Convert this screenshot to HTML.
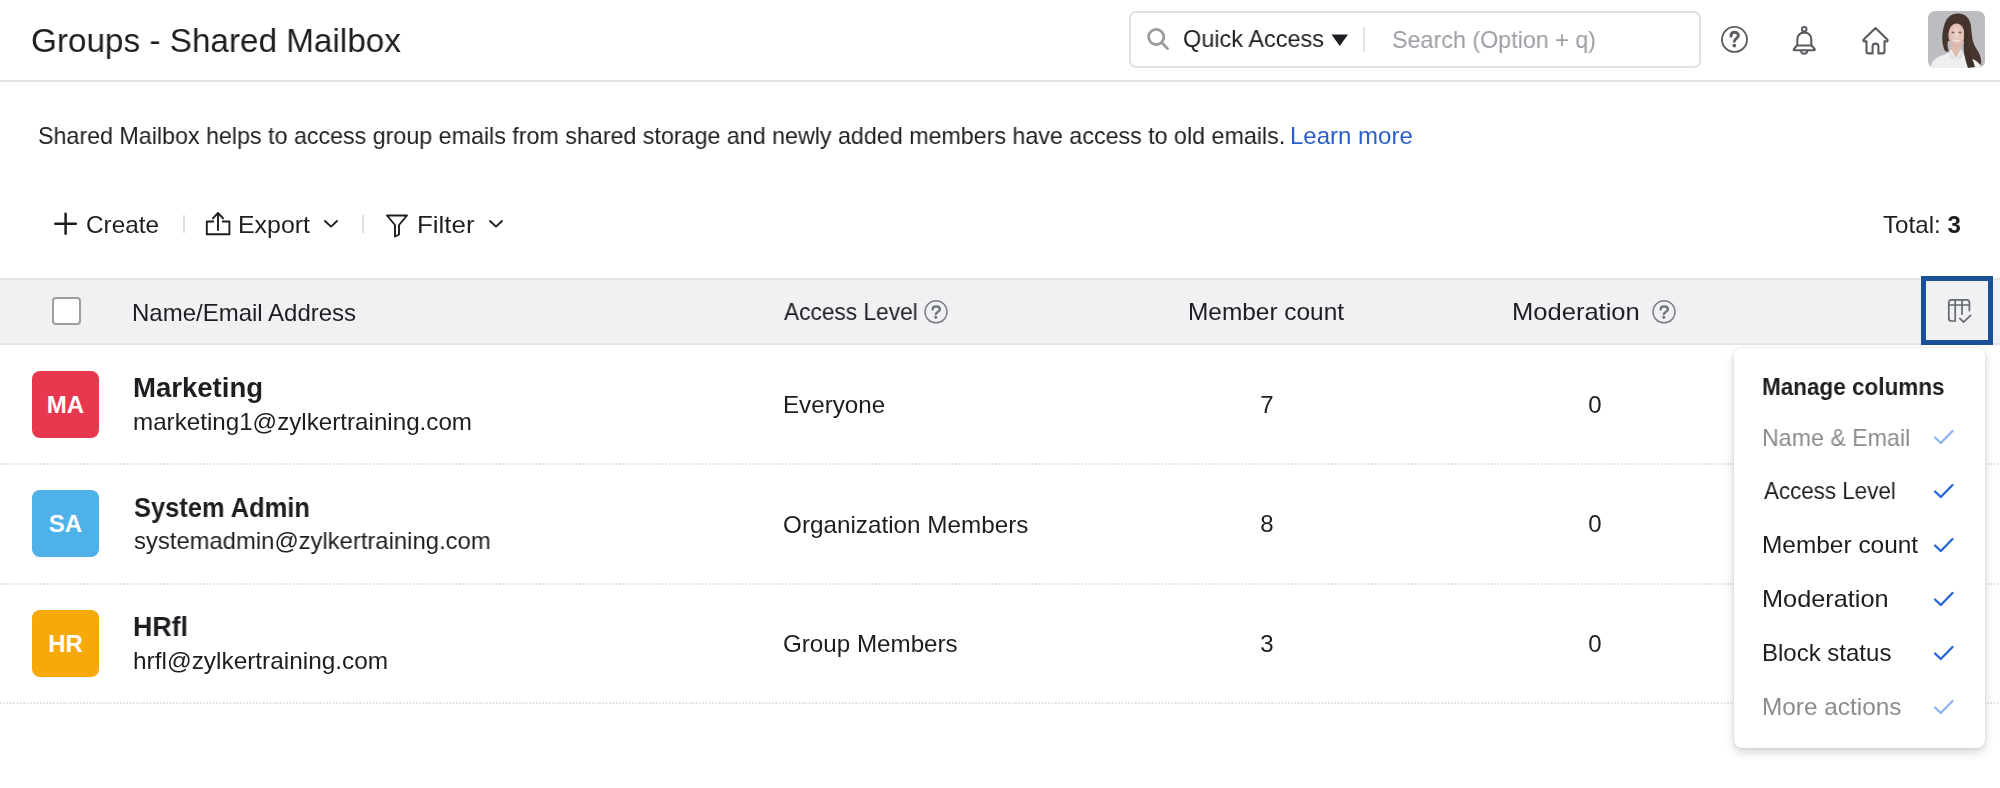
<!DOCTYPE html>
<html><head><meta charset="utf-8">
<style>
html,body{margin:0;padding:0;background:#fff;width:2000px;height:788px;overflow:hidden;position:relative;font-family:"Liberation Sans",sans-serif;}
.t{position:absolute;white-space:nowrap;line-height:1;transform-origin:0 0;will-change:transform;}
.av{position:absolute;left:32px;width:67px;height:67px;border-radius:8px;}
.av span{position:absolute;left:0;right:0;top:22px;text-align:center;color:#fff;font-weight:700;font-size:24px;line-height:1;}
</style></head><body>
<!-- header -->
<div style="position:absolute;left:0;top:80px;width:2000px;height:2px;background:#e2e3e6"></div>
<div style="position:absolute;left:1129px;top:11px;width:568px;height:53px;border:2px solid #e1e2e5;border-radius:7px;background:#fff"></div>
<svg style="position:absolute;left:1144px;top:25px" width="28" height="28" viewBox="0 0 28 28"><circle cx="12.2" cy="12" r="7.6" fill="none" stroke="#9a9a9a" stroke-width="2.8"/><path d="M17.9 17.7 L23.6 23.6" stroke="#9a9a9a" stroke-width="2.8" stroke-linecap="round"/></svg>
<svg style="position:absolute;left:1331px;top:34px" width="18" height="13" viewBox="0 0 18 13"><path d="M0.5 0.5 H17 L8.75 12 Z" fill="#1d1e21"/></svg>
<div style="position:absolute;left:1363px;top:27px;width:2px;height:25px;background:#e4e4e6"></div>
<!-- help -->
<svg style="position:absolute;left:1719px;top:25px" width="30" height="30" viewBox="0 0 30 30"><circle cx="15.5" cy="14.4" r="12.5" fill="none" stroke="#5b5e63" stroke-width="1.9"/><path d="M12 11.2 C12 8.7 13.5 7.3 15.5 7.3 C17.6 7.3 19.4 8.6 19.4 10.6 C19.4 13.2 15.6 13.6 15.3 16.4" fill="none" stroke="#5b5e63" stroke-width="2.9" stroke-linecap="round"/><circle cx="15.3" cy="20.6" r="1.9" fill="#5b5e63"/></svg>
<!-- bell -->
<svg style="position:absolute;left:1791px;top:25px" width="27" height="31" viewBox="0 0 27 31"><circle cx="13.2" cy="4.3" r="2.3" fill="none" stroke="#595c61" stroke-width="2"/><path d="M6.3 20 V14.5 C6.3 10 9.3 7.6 13.2 7.6 C17.1 7.6 20.3 10 20.3 14.5 V20" fill="none" stroke="#595c61" stroke-width="2.1"/><path d="M6 20.5 H20.5 L23.6 24 C24.1 24.7 23.8 25.3 23 25.3 H3.5 C2.7 25.3 2.4 24.7 2.9 24 Z" fill="none" stroke="#595c61" stroke-width="2.1" stroke-linejoin="round"/><path d="M10 25.8 C10.3 27.6 11.6 28.7 13.2 28.7 C14.8 28.7 16.1 27.6 16.4 25.8" fill="none" stroke="#595c61" stroke-width="2"/></svg>
<!-- home -->
<svg style="position:absolute;left:1860px;top:25px" width="31" height="31" viewBox="0 0 31 31"><path d="M15.5 3 L27.3 14.6 C28 15.3 27.6 16.4 26.6 16.4 H24.5 V26.4 C24.5 27.6 23.7 28.4 22.5 28.4 H18.4 V21.5 C18.4 19.9 17.1 18.6 15.5 18.6 C13.9 18.6 12.6 19.9 12.6 21.5 V28.4 H8.5 C7.3 28.4 6.5 27.6 6.5 26.4 V16.4 H4.4 C3.4 16.4 3 15.3 3.7 14.6 Z" fill="none" stroke="#595c61" stroke-width="2.1" stroke-linejoin="round"/></svg>
<!-- avatar photo -->
<svg style="position:absolute;left:1928px;top:11px" width="57" height="57" viewBox="0 0 57 57">
<defs><clipPath id="avc"><rect x="0" y="0" width="57" height="57" rx="7"/></clipPath>
<radialGradient id="fg" cx="0.5" cy="0.45" r="0.6"><stop offset="0" stop-color="#efd6cf"/><stop offset="1" stop-color="#d9b2a6"/></radialGradient></defs>
<g clip-path="url(#avc)">
<rect width="57" height="57" fill="#bcbdc0"/>
<path d="M17 40 C13 32 14 22 16 15 C18 7 23 2.5 30 2.5 C37 2.5 42 7 43 15 C44 24 44 31 48 37 C52 43 55 50 52 56 L38 58 C36 50 36 40 37 30 L20 30 C19 34 20 38 21 41 Z" fill="#45352e"/>
<path d="M3 57 C3 50 8 46 15 44 C19 43 22 41 23 38 L33 38 C35 43 38 46 44 48 C50 50 53 54 54 57 Z" fill="#efefef"/>
<path d="M23.5 28 H33 V38 L28 47 L23 38 Z" fill="#dfbcb1"/>
<path d="M22 40 L28 50 L21 46 Z M34 40 L28 50 L36 45 Z" fill="#e2e2e2"/>
<ellipse cx="28.5" cy="24" rx="8.2" ry="11.5" fill="url(#fg)"/>
<path d="M25 29 C27 30.5 30 30.5 32 29" fill="none" stroke="#f4ebe8" stroke-width="1.4"/>
<ellipse cx="25" cy="21.5" rx="1.5" ry="0.9" fill="#7a6058"/><ellipse cx="32" cy="21.5" rx="1.5" ry="0.9" fill="#7a6058"/>
<path d="M37 12 C41 18 40 28 39 34 C41 42 45 48 47 56 L40 57 C37 48 35 40 36 30 C36 24 36 16 37 12 Z" fill="#3f302a"/>
</g></svg>

<!-- toolbar -->
<svg style="position:absolute;left:52px;top:211px" width="27" height="26" viewBox="0 0 27 26"><path d="M13.6 2.8 V22.8 M3.3 12.75 H23.8" stroke="#1d1e21" stroke-width="2.5" stroke-linecap="round"/></svg>
<div style="position:absolute;left:183px;top:215px;width:1.5px;height:18px;background:#dedfe2"></div>
<svg style="position:absolute;left:204px;top:210px" width="28" height="27" viewBox="0 0 28 27"><path d="M10 11.5 H2.8 V24.3 H25.4 V11.5 H18" fill="none" stroke="#1d1e21" stroke-width="1.9" stroke-linejoin="round"/><path d="M14 20 V3.2 M8.9 8.4 L14 3 L19.1 8.4" fill="none" stroke="#1d1e21" stroke-width="1.9" stroke-linecap="round" stroke-linejoin="round"/></svg>
<svg style="position:absolute;left:322px;top:218px" width="18" height="11" viewBox="0 0 18 11"><path d="M3 3 L9 8.6 L15 3" fill="none" stroke="#1d1e21" stroke-width="1.9" stroke-linecap="round" stroke-linejoin="round"/></svg>
<div style="position:absolute;left:362px;top:215px;width:1.5px;height:18px;background:#dedfe2"></div>
<svg style="position:absolute;left:384px;top:212px" width="26" height="26" viewBox="0 0 26 26"><path d="M3 3.5 H23 L15 13 V22.5 L11 24.5 V13 Z" fill="none" stroke="#1d1e21" stroke-width="1.9" stroke-linejoin="round"/></svg>
<svg style="position:absolute;left:487px;top:218px" width="18" height="11" viewBox="0 0 18 11"><path d="M3 3 L9 8.6 L15 3" fill="none" stroke="#1d1e21" stroke-width="1.9" stroke-linecap="round" stroke-linejoin="round"/></svg>

<!-- table header -->
<div style="position:absolute;left:0;top:278px;width:2000px;height:67px;background:#f0f1f3;border-top:2px solid #e3e4e7;border-bottom:2px solid #e3e4e7;box-sizing:border-box"></div>
<div style="position:absolute;left:52px;top:297px;width:29px;height:28px;box-sizing:border-box;border:2px solid #9c9ea2;border-radius:4px;background:#fff"></div>
<svg style="position:absolute;left:923px;top:300px" width="26" height="25" viewBox="0 0 26 25"><circle cx="13" cy="11.85" r="11" fill="none" stroke="#808287" stroke-width="1.5"/><path d="M9.6 9.6 C9.6 7.5 11 6.4 13.1 6.4 C15.3 6.4 16.9 7.6 16.9 9.5 C16.9 11.8 13.1 12.2 12.8 14.2" fill="none" stroke="#6f7277" stroke-width="2.3" stroke-linecap="round"/><circle cx="12.75" cy="17.2" r="1.5" fill="#6f7277"/></svg>
<svg style="position:absolute;left:1651px;top:300px" width="26" height="25" viewBox="0 0 26 25"><circle cx="13" cy="11.85" r="11" fill="none" stroke="#808287" stroke-width="1.5"/><path d="M9.6 9.6 C9.6 7.5 11 6.4 13.1 6.4 C15.3 6.4 16.9 7.6 16.9 9.5 C16.9 11.8 13.1 12.2 12.8 14.2" fill="none" stroke="#6f7277" stroke-width="2.3" stroke-linecap="round"/><circle cx="12.75" cy="17.2" r="1.5" fill="#6f7277"/></svg>
<div style="position:absolute;left:1921px;top:276px;width:72px;height:69px;box-sizing:border-box;border:5px solid #1b4f98"></div>
<svg style="position:absolute;left:1946px;top:298px" width="28" height="28" viewBox="0 0 28 28"><path d="M2.8 20.5 V4.6 C2.8 2.9 3.7 1.9 5.4 1.9 H20.7 C22.4 1.9 23.4 2.9 23.4 4.6 V12.6" fill="none" stroke="#66696e" stroke-width="1.7" stroke-linecap="round"/><path d="M2.8 20.5 C2.8 22.3 3.7 23 5.4 23 H9.2 V1.9 M2.8 7 H23.4 M16 1.9 V16.2" fill="none" stroke="#66696e" stroke-width="1.7" stroke-linecap="round"/><path d="M13.8 20.3 L17.5 24.2 L24.7 17.4" fill="none" stroke="#66696e" stroke-width="1.7" stroke-linecap="round" stroke-linejoin="round"/></svg>

<!-- rows -->
<div class="av" style="top:370.5px;background:#e8384f"><span>MA</span></div>
<div class="av" style="top:490px;background:#4eb1e7"><span>SA</span></div>
<div class="av" style="top:609.5px;background:#f8a90a"><span>HR</span></div>
<div style="position:absolute;left:0;top:463px;width:2000px;height:2px;background-image:linear-gradient(to right,#dfe0e3 60%,transparent 60%);background-size:3.333px 2px"></div>
<div style="position:absolute;left:0;top:582.5px;width:2000px;height:2px;background-image:linear-gradient(to right,#dfe0e3 60%,transparent 60%);background-size:3.333px 2px"></div>
<div style="position:absolute;left:0;top:702px;width:2000px;height:2px;background-image:linear-gradient(to right,#dfe0e3 60%,transparent 60%);background-size:3.333px 2px"></div>

<!-- dropdown -->
<div style="position:absolute;left:1734px;top:348px;width:251px;height:400px;background:#fff;border-radius:8px;box-shadow:0 4px 10px rgba(0,0,0,0.18),0 0 2px rgba(0,0,0,0.12)"></div>
<div style="position:absolute;left:1933px;top:429px;width:22px;height:16px"><svg width="22" height="16" viewBox="0 0 22 16"><path d="M2 8.5 L7.8 14 L19.5 2" fill="none" stroke="#8fb1f1" stroke-width="2.3" stroke-linecap="round" stroke-linejoin="round"/></svg></div>
<div style="position:absolute;left:1933px;top:483px;width:22px;height:16px"><svg width="22" height="16" viewBox="0 0 22 16"><path d="M2 8.5 L7.8 14 L19.5 2" fill="none" stroke="#2563d9" stroke-width="2.3" stroke-linecap="round" stroke-linejoin="round"/></svg></div>
<div style="position:absolute;left:1933px;top:537px;width:22px;height:16px"><svg width="22" height="16" viewBox="0 0 22 16"><path d="M2 8.5 L7.8 14 L19.5 2" fill="none" stroke="#2563d9" stroke-width="2.3" stroke-linecap="round" stroke-linejoin="round"/></svg></div>
<div style="position:absolute;left:1933px;top:591px;width:22px;height:16px"><svg width="22" height="16" viewBox="0 0 22 16"><path d="M2 8.5 L7.8 14 L19.5 2" fill="none" stroke="#2563d9" stroke-width="2.3" stroke-linecap="round" stroke-linejoin="round"/></svg></div>
<div style="position:absolute;left:1933px;top:645px;width:22px;height:16px"><svg width="22" height="16" viewBox="0 0 22 16"><path d="M2 8.5 L7.8 14 L19.5 2" fill="none" stroke="#2563d9" stroke-width="2.3" stroke-linecap="round" stroke-linejoin="round"/></svg></div>
<div style="position:absolute;left:1933px;top:699px;width:22px;height:16px"><svg width="22" height="16" viewBox="0 0 22 16"><path d="M2 8.5 L7.8 14 L19.5 2" fill="none" stroke="#8fb1f1" stroke-width="2.3" stroke-linecap="round" stroke-linejoin="round"/></svg></div>

<div class="t" id="title" style="left:31.04px;top:23.22px;font-size:34px;font-weight:400;color:#1d1e21;transform:scaleX(0.9787)">Groups - Shared Mailbox</div>
<div class="t" id="qa" style="left:1183.02px;top:26.68px;font-size:24px;font-weight:400;color:#1d1e21;transform:scaleX(0.9789)">Quick Access</div>
<div class="t" id="ph" style="left:1392.03px;top:28.18px;font-size:24px;font-weight:400;color:#9a9da3;transform:scaleX(0.9712)">Search (Option + q)</div>
<div class="t" id="desc" style="left:38.03px;top:123.68px;font-size:24px;font-weight:400;color:#1d1e21;transform:scaleX(0.9688)">Shared Mailbox helps to access group emails from shared storage and newly added members have access to old emails.</div>
<div class="t" id="learn" style="left:1290.00px;top:123.68px;font-size:24px;font-weight:400;color:#2a5ec8;transform:scaleX(1.0000)">Learn more</div>
<div class="t" id="create" style="left:85.99px;top:212.68px;font-size:24px;font-weight:400;color:#1d1e21;transform:scaleX(1.0143)">Create</div>
<div class="t" id="export" style="left:237.93px;top:212.68px;font-size:24px;font-weight:400;color:#1d1e21;transform:scaleX(1.0373)">Export</div>
<div class="t" id="filter" style="left:416.84px;top:212.68px;font-size:24px;font-weight:400;color:#1d1e21;transform:scaleX(1.0784)">Filter</div>
<div class="t" id="total" style="left:1883.00px;top:212.68px;font-size:24px;font-weight:400;color:#1d1e21;transform:scaleX(1.0066)">Total: <b>3</b></div>
<div class="t" id="hname" style="left:132.00px;top:300.68px;font-size:24px;font-weight:400;color:#1d1e21;transform:scaleX(1.0000)">Name/Email Address</div>
<div class="t" id="hacc" style="left:784.03px;top:300.28px;font-size:24px;font-weight:400;color:#1d1e21;transform:scaleX(0.9460)">Access Level</div>
<div class="t" id="hmem" style="left:1187.76px;top:300.28px;font-size:24px;font-weight:400;color:#1d1e21;transform:scaleX(1.0171)">Member count</div>
<div class="t" id="hmod" style="left:1511.87px;top:299.68px;font-size:24px;font-weight:400;color:#1d1e21;transform:scaleX(1.0641)">Moderation</div>
<div class="t" id="r1n" style="left:132.97px;top:375.14px;font-size:27px;font-weight:700;color:#1d1e21;transform:scaleX(1.0202)">Marketing</div>
<div class="t" id="r1e" style="left:132.99px;top:409.68px;font-size:24px;font-weight:400;color:#1d1e21;transform:scaleX(1.0075)">marketing1@zylkertraining.com</div>
<div class="t" id="r1a" style="left:782.58px;top:392.68px;font-size:24px;font-weight:400;color:#1d1e21;transform:scaleX(1.0071)">Everyone</div>
<div class="t" id="r2n" style="left:134.03px;top:494.84px;font-size:27px;font-weight:700;color:#1d1e21;transform:scaleX(0.9432)">System Admin</div>
<div class="t" id="r2e" style="left:134.00px;top:528.88px;font-size:24px;font-weight:400;color:#1d1e21;transform:scaleX(0.9930)">systemadmin@zylkertraining.com</div>
<div class="t" id="r2a" style="left:783.37px;top:512.68px;font-size:24px;font-weight:400;color:#1d1e21;transform:scaleX(1.0112)">Organization Members</div>
<div class="t" id="r3n" style="left:133.40px;top:614.24px;font-size:27px;font-weight:700;color:#1d1e21;transform:scaleX(0.9906)">HRfl</div>
<div class="t" id="r3e" style="left:132.98px;top:648.68px;font-size:24px;font-weight:400;color:#1d1e21;transform:scaleX(1.0161)">hrfl@zylkertraining.com</div>
<div class="t" id="r3a" style="left:783.38px;top:632.18px;font-size:24px;font-weight:400;color:#1d1e21;transform:scaleX(1.0076)">Group Members</div>
<div class="t" id="mc" style="left:1762.12px;top:374.68px;font-size:24px;font-weight:700;color:#1d1e21;transform:scaleX(0.9375)">Manage columns</div>
<div class="t" id="m1" style="left:1762.07px;top:425.68px;font-size:24px;font-weight:400;color:#8b8c8f;transform:scaleX(0.9667)">Name &amp; Email</div>
<div class="t" id="m2" style="left:1764.00px;top:479.18px;font-size:24px;font-weight:400;color:#1d1e21;transform:scaleX(0.9321)">Access Level</div>
<div class="t" id="m3" style="left:1761.96px;top:532.68px;font-size:24px;font-weight:400;color:#1d1e21;transform:scaleX(1.0179)">Member count</div>
<div class="t" id="m4" style="left:1761.89px;top:587.38px;font-size:24px;font-weight:400;color:#1d1e21;transform:scaleX(1.0547)">Moderation</div>
<div class="t" id="m5" style="left:1762.00px;top:641.18px;font-size:24px;font-weight:400;color:#1d1e21;transform:scaleX(1.0000)">Block status</div>
<div class="t" id="m6" style="left:1761.97px;top:695.18px;font-size:24px;font-weight:400;color:#8b8c8f;transform:scaleX(1.0148)">More actions</div>
<div class="t c" id="r1c" style="left:1217.00px;top:392.68px;width:100px;text-align:center;font-size:24px;color:#1d1e21">7</div>
<div class="t c" id="r1m" style="left:1545.30px;top:392.68px;width:100px;text-align:center;font-size:24px;color:#1d1e21">0</div>
<div class="t c" id="r2c" style="left:1217.00px;top:512.18px;width:100px;text-align:center;font-size:24px;color:#1d1e21">8</div>
<div class="t c" id="r2m" style="left:1545.30px;top:512.18px;width:100px;text-align:center;font-size:24px;color:#1d1e21">0</div>
<div class="t c" id="r3c" style="left:1217.00px;top:631.68px;width:100px;text-align:center;font-size:24px;color:#1d1e21">3</div>
<div class="t c" id="r3m" style="left:1545.30px;top:631.68px;width:100px;text-align:center;font-size:24px;color:#1d1e21">0</div>
</body></html>
